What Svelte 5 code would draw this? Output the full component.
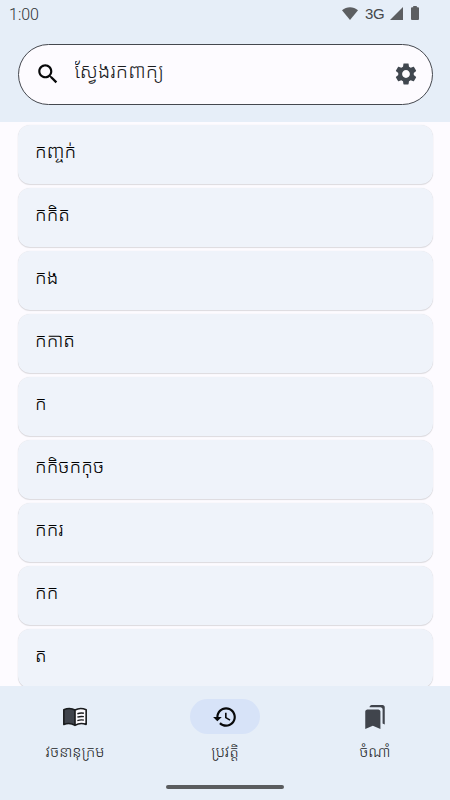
<script lang="ts">
  interface Tab {
    id: string;
    label: string;
  }

  const tabs: Tab[] = [
    { id: 'dictionary', label: 'វចនានុក្រម' },
    { id: 'history', label: 'ប្រវត្តិ' },
    { id: 'bookmarks', label: 'ចំណាំ' },
  ];

  const words = ['កញ្ចក់', 'កកិត', 'កង', 'កកាត', 'ក', 'កកិចកកុច', 'កករ', 'កក', 'ត'];

  let active = $state('history');
  let query = $state('');
</script>

<div class="screen">
  <header>
    <div class="status-bar">
      <span class="clock">1:00</span>
      <div class="status-icons">
        <svg class="wifi" viewBox="0 0 16 13"><path d="M8 13 0 3.2C4.700-.9 11.300-.9 16 3.200z" /></svg>
        <span class="network">3G</span>
        <svg class="signal" viewBox="0 0 13 13"><path d="M13 0v13H0z" /></svg>
        <svg class="battery" viewBox="0 0 8 14"><path d="M2.200 0h3.600v1.300H7a1 1 0 0 1 1 1V13a1 1 0 0 1-1 1H1a1 1 0 0 1-1-1V2.300a1 1 0 0 1 1-1h1.200z" /></svg>
      </div>
    </div>

    <div class="search">
      <svg class="icon search-icon" viewBox="0 0 24 24">
        <path d="M15.500 14h-.79l-.28-.27C15.410 12.590 16 11.110 16 9.500 16 5.910 13.090 3 9.500 3S3 5.910 3 9.500 5.910 16 9.500 16c1.610 0 3.090-.59 4.230-1.570l.27.28v.79l5 4.990L20.490 19l-4.990-5zm-6 0C7.010 14 5 11.990 5 9.500S7.010 5 9.500 5 14 7.010 14 9.500 11.990 14 9.500 14z" />
      </svg>
      <input type="text" placeholder="ស្វែងរកពាក្យ" bind:value={query} />
      <button class="settings" aria-label="ការកំណត់">
        <svg class="icon" viewBox="0 0 24 24">
          <path d="M19.140 12.940c.04-.3.06-.61.06-.94 0-.32-.02-.64-.07-.94l2.030-1.580c.18-.14.23-.41.12-.61l-1.920-3.320c-.12-.22-.37-.29-.59-.22l-2.390.96c-.5-.38-1.030-.7-1.620-.94l-.36-2.540c-.04-.24-.24-.41-.48-.41h-3.840c-.24 0-.43.17-.47.41l-.36 2.540c-.59.24-1.130.57-1.620.94l-2.390-.96c-.22-.08-.47 0-.59.22L2.740 8.870c-.12.21-.08.47.12.61l2.030 1.580c-.05.3-.09.63-.09.94s.02.64.07.94l-2.030 1.580c-.18.14-.23.41-.12.61l1.920 3.320c.12.22.37.29.59.22l2.390-.96c.5.38 1.030.7 1.620.94l.36 2.540c.05.24.24.41.48.41h3.840c.24 0 .44-.17.47-.41l.36-2.540c.59-.24 1.130-.56 1.620-.94l2.390.96c.22.08.47 0 .59-.22l1.920-3.320c.12-.22.07-.47-.12-.61l-2.010-1.580zM12 15.600c-1.980 0-3.600-1.620-3.600-3.600s1.620-3.600 3.600-3.600 3.600 1.620 3.600 3.600-1.620 3.600-3.600 3.600z" />
        </svg>
      </button>
    </div>
  </header>

  <main>
    <ul class="word-list">
      {#each words as word}
        <li class="word-card">{word}</li>
      {/each}
    </ul>
  </main>

  <footer>
    <nav>
      {#each tabs as tab}
        <button class="tab" class:active={active === tab.id} onclick={() => (active = tab.id)}>
          <span class="pill">
            {#if tab.id === 'dictionary'}
              <svg class="icon" viewBox="0 0 24 24">
                <path class="paper" d="M12 5.600c3-1.800 7-1.800 10.300-.3v13.500c-3.300-1.200-7.300-1-10.300.9z" />
                <path class="page" d="M1.700 5.300C5 3.800 9 3.800 12 5.600v14.100c-3-1.900-7-2.100-10.300-.9z" />
                <path class="outline" d="M1.700 5.300C5 3.800 9 3.800 12 5.600c3-1.800 7-1.800 10.300-.3v13.500c-3.300-1.200-7.300-1-10.300.9-3-1.900-7-2.100-10.300-.9zM12 5.600v13.900" />
                <path class="lines" d="M14.200 9c1.800-.7 3.900-.9 6-.5M14.200 12.200c1.800-.7 3.900-.9 6-.5M14.200 15.400c1.800-.7 3.900-.9 6-.5" />
              </svg>
            {:else if tab.id === 'history'}
              <svg class="icon" viewBox="0 0 24 24">
                <path d="M13 3c-4.970 0-9 4.030-9 9H1l3.890 3.890.07.14L9 12H6c0-3.870 3.130-7 7-7s7 3.130 7 7-3.130 7-7 7c-1.930 0-3.680-.79-4.940-2.060l-1.420 1.420C8.270 19.990 10.510 21 13 21c4.970 0 9-4.030 9-9s-4.030-9-9-9zm-1 5v5l4.280 2.540.72-1.210-3.500-2.080V8H12z" />
              </svg>
            {:else}
              <svg class="icon" viewBox="0 0 24 24">
                <path d="m19 18 2 1V3c0-1.100-.9-2-2-2H8.990C7.890 1 7 1.900 7 3h10c1.100 0 2 .9 2 2v13zM15 5H5c-1.100 0-2 .9-2 2v16l7-3 7 3V7c0-1.100-.9-2-2-2z" />
              </svg>
            {/if}
          </span>
          <span class="label">{tab.label}</span>
        </button>
      {/each}
    </nav>
    <div class="home-handle"></div>
  </footer>
</div>

<style>
  :global(body) {
    background: #fdfbff;
  }

  .screen {
    display: flex;
    flex-direction: column;
    height: 800px;
    overflow: hidden;
    background: #fdfbff;
    color: #1a1c1e;
    font-family: Roboto, 'Noto Sans Khmer', 'Khmer OS', sans-serif;
  }

  header {
    flex: none;
    box-sizing: border-box;
    height: 122px;
    background: #e6eef8;
  }

  .status-bar {
    display: flex;
    align-items: center;
    justify-content: space-between;
    box-sizing: border-box;
    height: 27px;
    padding: 0 31px 1px 9px;
    color: #45484b;
  }

  .clock {
    padding-top: 2px;
    font-weight: 300;
    font-size: 16px;
    color: #303336;
  }

  .status-icons {
    display: flex;
    align-items: center;
  }

  .status-icons svg {
    fill: #5c5e61;
  }

  .wifi {
    width: 16px;
    height: 13px;
    margin-right: 7px;
  }

  .network {
    width: 20px;
    margin-right: 5px;
    font-family: 'Liberation Sans', Arial, sans-serif;
    font-size: 15px;
    letter-spacing: -0.3px;
  }

  .signal {
    width: 13px;
    height: 13px;
    margin-right: 8px;
  }

  .battery {
    width: 8px;
    height: 14px;
  }

  .search {
    display: flex;
    align-items: center;
    box-sizing: border-box;
    height: 61px;
    margin: 17px 17.5px 0;
    padding: 0 13px 0 16px;
    border: 1px solid #45484f;
    border-radius: 31px;
    background: #fdfbff;
  }

  .icon {
    display: block;
    width: 26px;
    height: 26px;
    fill: currentColor;
  }

  .search-icon {
    flex: none;
    margin-top: -1px;
    color: #08090a;
  }

  input {
    flex: 1;
    min-width: 0;
    height: 40px;
    margin: 0 0 7px 14px;
    padding: 0;
    border: 0;
    outline: 0;
    background: none;
    color: #1a1c1e;
    font: inherit;
    font-size: 20px;
    font-weight: 300;
  }

  input::placeholder {
    color: #1a1c1e;
    opacity: 1;
  }

  button {
    padding: 0;
    border: 0;
    background: none;
    font: inherit;
    cursor: pointer;
  }

  .settings {
    margin-top: -2px;
    color: #40474f;
  }

  main {
    flex: 1;
    min-height: 0;
    overflow: hidden;
  }

  .word-list {
    display: flex;
    flex-direction: column;
    gap: 4px;
    margin: 0;
    padding: 3px 17.5px 0;
    list-style: none;
  }

  .word-card {
    flex: none;
    box-sizing: border-box;
    height: 59px;
    padding: 11px 17.5px;
    border-radius: 12px;
    background: #eff3fa;
    box-shadow: 0 1px 1px rgba(0, 0, 0, 0.12), 0 0 1px rgba(0, 0, 0, 0.12);
    color: #000;
    font-size: 19px;
    font-weight: 300;
    line-height: 32px;
  }

  footer {
    flex: none;
    box-sizing: border-box;
    height: 114px;
    background: #e6eef8;
  }

  nav {
    display: flex;
    height: 99px;
  }

  .tab {
    flex: 1;
    display: flex;
    flex-direction: column;
    align-items: center;
    padding-top: 13px;
    color: #40444c;
  }

  .pill {
    display: flex;
    align-items: center;
    justify-content: center;
    width: 70px;
    height: 35px;
    border-radius: 18px;
  }

  .active .pill {
    background: #d7e3f8;
    color: #08090a;
  }

  .label {
    margin-top: 5px;
    color: #1a1c1e;
    font-size: 15px;
    font-weight: 300;
    line-height: 26px;
    white-space: nowrap;
  }

  .page {
    fill: #40444c;
  }

  .paper {
    fill: #fdfbff;
  }

  .outline {
    fill: none;
    stroke: #1a1c1e;
    stroke-width: 1.5;
    stroke-linejoin: round;
  }

  .lines {
    fill: none;
    stroke: #1a1c1e;
    stroke-width: 1.3;
  }

  .home-handle {
    width: 118px;
    height: 4px;
    margin: 0 auto;
    border-radius: 2px;
    background: #5a5c5f;
  }
</style>
